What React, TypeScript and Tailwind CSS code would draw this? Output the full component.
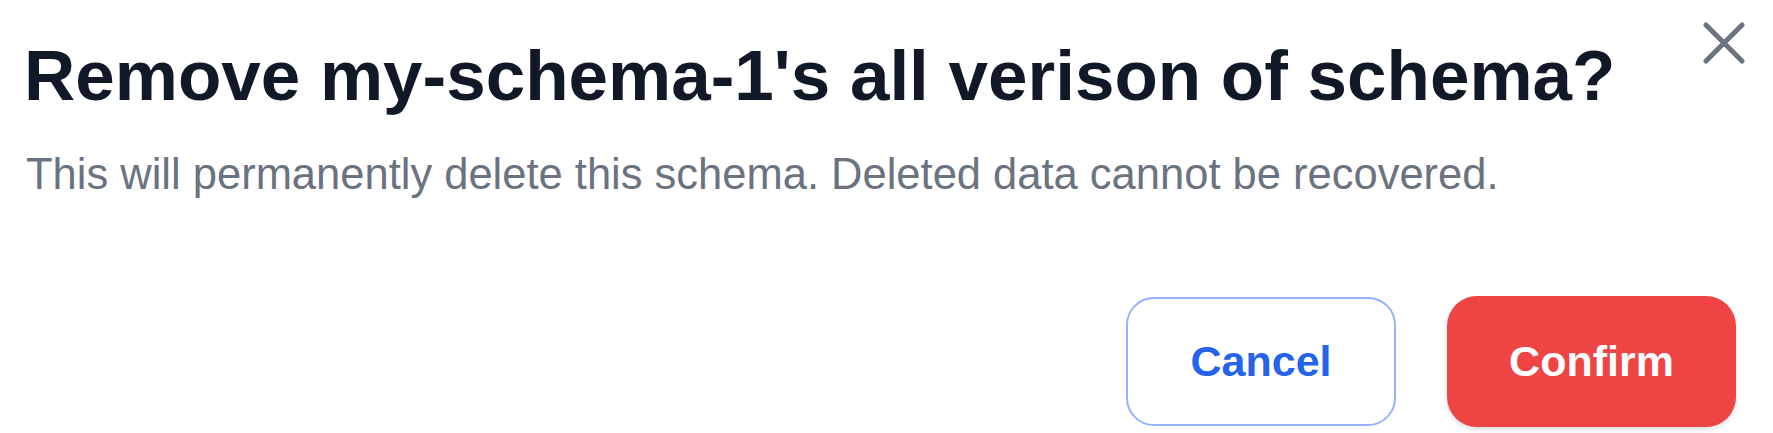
export default function App() {
  return (
    <div className="w-[1773px] h-[433px] bg-white font-['Liberation_Sans',Arial,sans-serif] flex flex-col">
      <div className="flex items-start justify-between pl-[24px] pr-[28px]">
        <h2 className="mt-[40px] text-[71px] leading-[71px] font-bold text-[#111827]">
          Remove my-schema-1's all verison of schema?
        </h2>
        <button className="mt-[22px] text-[#6b7280]">
          <svg width="42" height="42" viewBox="0 0 42 42" fill="none" stroke="currentColor" strokeWidth="5" strokeLinecap="round">
            <path d="M3 3L39 39M39 3L3 39" />
          </svg>
        </button>
      </div>
      <p className="pl-[26px] mt-[42px] text-[43.5px] leading-[43.5px] text-[#6b7280]">
        This will permanently delete this schema. Deleted data cannot be recovered.
      </p>
      <div className="mt-auto mb-[6px] flex items-center justify-end gap-[51px] pr-[37px]">
        <button className="w-[270px] h-[129px] rounded-[28px] border-2 border-[#93b4fd] bg-white text-[#2563eb] text-[43px] font-bold">
          Cancel
        </button>
        <button className="w-[289px] h-[131px] rounded-[30px] bg-[#ef4444] text-white text-[43px] font-bold shadow-md">
          Confirm
        </button>
      </div>
    </div>
  );
}
